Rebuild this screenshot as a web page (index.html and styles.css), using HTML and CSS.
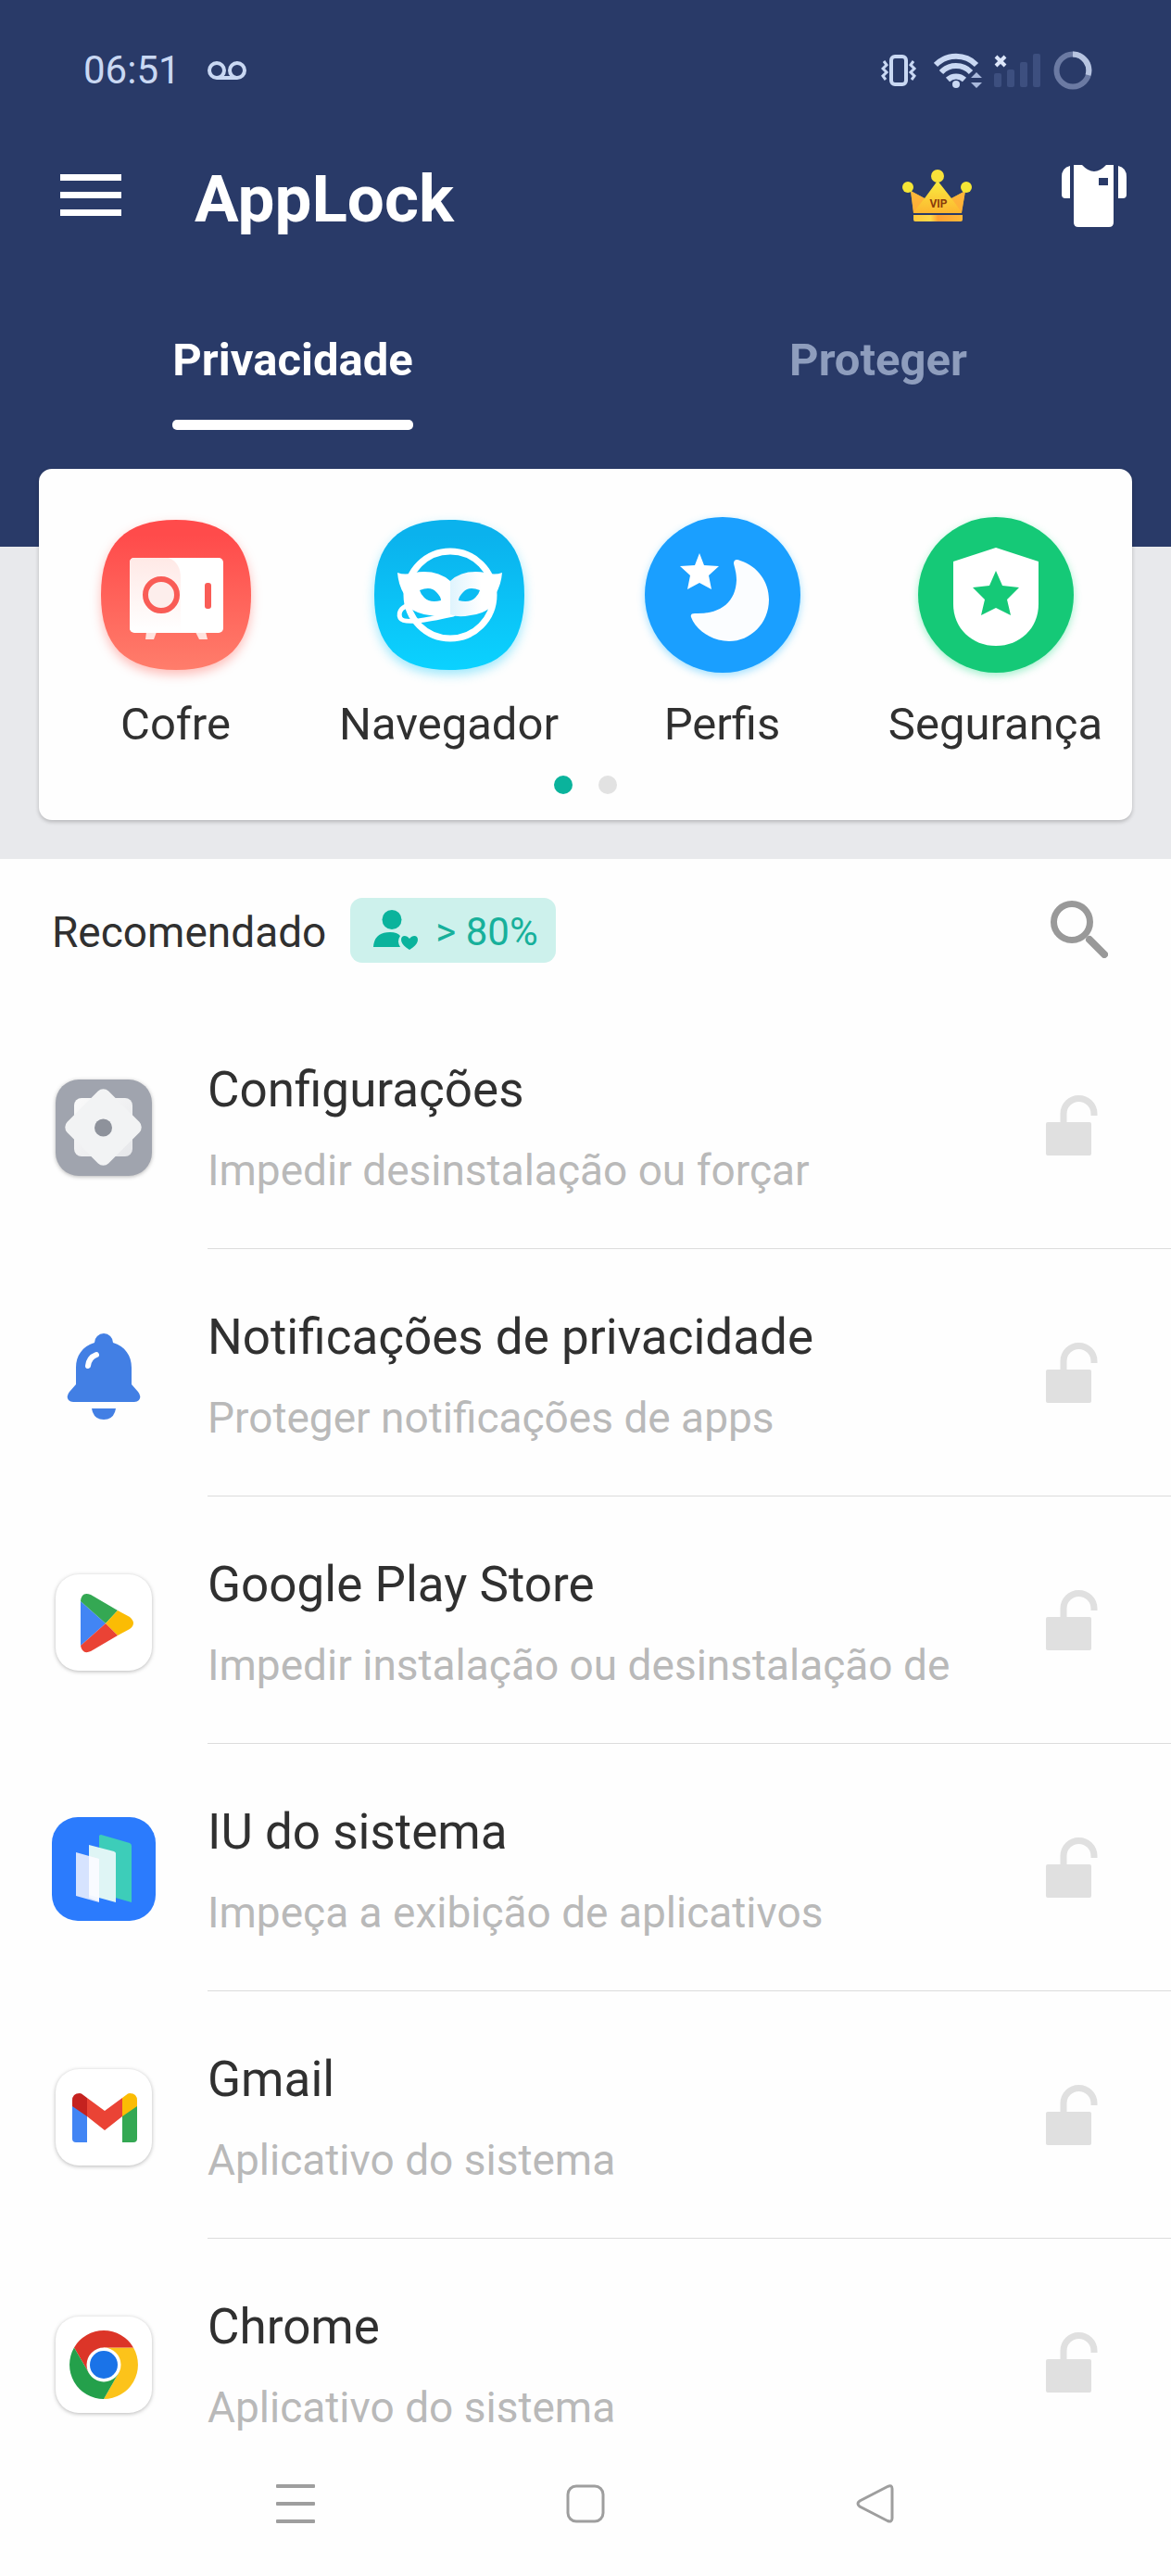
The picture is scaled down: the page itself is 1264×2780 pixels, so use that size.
FILE: index.html
```html
<!DOCTYPE html>
<html lang="pt-BR">
<head>
<meta charset="utf-8">
<meta name="viewport" content="width=device-width, initial-scale=1">
<title>AppLock</title>
<link rel="stylesheet" href="styles.css">
</head>
<body>
<svg class="defs" aria-hidden="true">
  <defs>
    <symbol id="unlocked" viewBox="0 0 56 66">
      <rect x="0" y="29" width="49" height="36" rx="2" fill="#e0e0e0"/>
      <path d="M19 31V20a16.500 16.500 0 0 1 33 0V22" fill="none" stroke="#e0e0e0" stroke-width="7"/>
    </symbol>
  </defs>
</svg>

<header class="header">
  <div class="status">
    <span class="status-side">
      <span class="clock">06:51</span>
      <svg width="44" height="22" viewBox="0 0 44 22" fill="none" stroke="#c9d8f3" stroke-width="4"><circle cx="11" cy="11" r="8"/><circle cx="33" cy="11" r="8"/><path d="M11 19H33"/></svg>
    </span>
    <span class="status-side status-icons">
      <svg width="44" height="34" viewBox="0 0 44 34" fill="none" stroke="#c9d8f3" stroke-width="4"><rect x="11" y="2" width="16" height="30" rx="4"/><path d="M3 7l3 4-4 4 4 4-4 4 3 4M35 7l-3 4 4 4-4 4 4 4-3 4" stroke-width="3"/></svg>
      <svg width="52" height="40" viewBox="0 0 52 40"><g fill="none" stroke="#c9d8f3" stroke-width="6"><path d="M2 14a31 31 0 0 1 44 0"/><path d="M8 22a22 22 0 0 1 32 0"/><path d="M15 30a13 13 0 0 1 18 0"/></g><circle cx="24" cy="35" r="4" fill="#c9d8f3"/><path d="M40 28l6-6 6 6zM40 33h12l-6 6z" fill="#a9b9dc"/></svg>
      <svg width="51" height="36" viewBox="0 0 51 36"><path d="M2 3l10 10M12 3L2 13" stroke="#dce6fa" stroke-width="4"/><g fill="#3d4f7f"><rect y="21" width="8" height="15" rx="2"/><rect x="14" y="17" width="8" height="19" rx="2"/><rect x="28" y="9" width="8" height="27" rx="2"/><rect x="42" width="8" height="36" rx="2"/></g></svg>
      <svg width="42" height="42" viewBox="0 0 42 42" fill="none" stroke-width="6"><circle cx="21" cy="21" r="17.500" stroke="#6b7aa3"/><path d="M21 3.500A17.500 17.500 0 0 1 37.500 26" stroke="#b7c4e0"/></svg>
    </span>
  </div>

  <div class="appbar">
    <button class="icon-button" type="button" aria-label="Menu">
      <svg width="66" height="46" viewBox="0 0 66 46" fill="#fff"><path d="M0 0h66v7H0zM0 19h66v7H0zM0 38h66v7H0z"/></svg>
    </button>
    <h1 class="app-title">AppLock</h1>
    <button class="icon-button" type="button" aria-label="VIP">
      <svg width="76" height="56" viewBox="0 0 76 56">
        <defs>
          <linearGradient id="gold" x1="0" y1="0" x2="0" y2="1"><stop offset="0" stop-color="#f8ee3f"/><stop offset="1" stop-color="#fdb530"/></linearGradient>
          <linearGradient id="band"><stop offset="0" stop-color="#ffc93c"/><stop offset=".35" stop-color="#ffd94a"/><stop offset=".5" stop-color="#ffa033"/><stop offset="1" stop-color="#ffb938"/></linearGradient>
        </defs>
        <path d="M9 23l15 8L38 12l15 19 15-8-4 24H12z" fill="url(#gold)"/>
        <path d="M9 23l15 8-12 15zM68 23l-15 8 11 15z" fill="#ffa83a" opacity=".7"/>
        <path d="M12 49h53v5q0 2-2 2H14q-2 0-2-2z" fill="url(#band)"/>
        <circle cx="38" cy="7" r="7" fill="#f8e23a"/><circle cx="6" cy="19" r="6" fill="#f5e636"/><circle cx="69" cy="19" r="6" fill="#f5e636"/>
        <text x="39" y="41" class="vip">VIP</text>
      </svg>
    </button>
    <button class="icon-button" type="button" aria-label="Temas">
      <svg width="70" height="67" viewBox="0 0 70 67" fill="#fff"><path fill-rule="evenodd" d="M13 0h9q13 14 26 0h8v62q0 5-5 5H18q-5 0-5-5zM40 14v8h10v-8z"/><path d="M9 1v35H4q-4 0-4-4V13Q0 3 9 1zM61 1v35h5q4 0 4-4V13Q70 3 61 1z"/></svg>
    </button>
  </div>

  <nav class="tabs" aria-label="Seções">
    <a class="tab tab-active" href="#privacidade" aria-current="page">Privacidade</a>
    <a class="tab" href="#proteger">Proteger</a>
  </nav>
</header>

<main id="privacidade">
  <section class="shortcuts">
    <div class="card">
      <div class="shortcut-grid">
        <a class="shortcut" href="#cofre">
          <svg class="glow-red" width="168" height="168" viewBox="0 0 168 168">
            <defs><linearGradient id="red" x1="0" y1="0" x2="0" y2="1"><stop offset=".1" stop-color="#ff4b4b"/><stop offset="1" stop-color="#ff7d6b"/></linearGradient>
            <linearGradient id="shade" x1="0" y1="0" x2="0" y2="1"><stop offset="0" stop-color="#ffe9e6"/><stop offset="1" stop-color="#fff"/></linearGradient></defs>
            <path d="M84 3C139 3 165 29 165 84S139 165 84 165 3 139 3 84 29 3 84 3z" fill="url(#red)"/>
            <path d="M52 124h11l-3 8h-9zM105 124h11l2 8h-9z" fill="#ffe3df"/>
            <rect x="34" y="44" width="101" height="81" rx="5" fill="#fff"/>
            <path d="M39 44h37q13 5 13 22v58H39q-5 0-5-5V49q0-5 5-5z" fill="url(#shade)"/>
            <circle cx="68" cy="84" r="17" fill="#fdeeec" stroke="#f95c56" stroke-width="6"/>
            <rect x="115" y="71" width="7" height="28" rx="3" fill="#f95c56"/>
          </svg>
          <span>Cofre</span>
        </a>
        <a class="shortcut" href="#navegador">
          <svg class="glow-cyan" width="168" height="168" viewBox="0 0 168 168">
            <defs><linearGradient id="cyan" x1="0" y1="0" x2="0" y2="1"><stop offset=".1" stop-color="#0bb2ed"/><stop offset="1" stop-color="#0bd2ff"/></linearGradient>
            <linearGradient id="wing"><stop offset="0" stop-color="#dff4fd"/><stop offset=".6" stop-color="#fff"/></linearGradient></defs>
            <path d="M84 3C139 3 165 29 165 84S139 165 84 165 3 139 3 84 29 3 84 3z" fill="url(#cyan)"/>
            <circle cx="85" cy="84" r="47" fill="none" stroke="#fff" stroke-width="7"/>
            <path d="M44 96C34 94 28 102 31 109C35 116 60 111 88 105" fill="none" stroke="#fff" stroke-width="5" stroke-linecap="round"/>
            <path d="M28 60q8 3 18 0 24-4 39 9v36q-8 4-22 1-27-3-28-23Q29 73 28 60z" fill="#fff"/>
            <path d="M141 60q-8 3-18 0-24-4-38 9v36q8 4 22 1 26-3 27-23 6-10 7-23z" fill="url(#wing)"/>
            <path d="M52 79q12-5 18 2 5 5 5 9-12 3-18-3-4-4-5-8zM117 79q-12-5-18 2-5 5-5 9 12 3 18-3 4-4 5-8z" fill="#0bbbf2"/>
          </svg>
          <span>Navegador</span>
        </a>
        <a class="shortcut" href="#perfis">
          <svg class="glow-blue" width="168" height="168" viewBox="0 0 168 168">
            <circle cx="84" cy="84" r="84" fill="#1a9fff"/>
            <path d="M59 39l5 13 16 1-11 10 3 15-13-7-13 7 3-15-11-10 16-1z" fill="#fff"/>
            <path d="M96 50C96 46 99 45 103 47C122 53 134 70 134 89C134 115 114 134 91 134C73 134 55 122 50 108C49 105 51 104 54 104C82 105 98 92 99 68C99 60 97 55 96 50z" fill="#fbfdff"/>
          </svg>
          <span>Perfis</span>
        </a>
        <a class="shortcut" href="#seguranca">
          <svg class="glow-green" width="168" height="168" viewBox="0 0 168 168">
            <circle cx="84" cy="84" r="84" fill="#15c977"/>
            <path d="M84 33l46 15v46c0 26-20 45-46 45s-46-19-46-45V48z" fill="#fff"/>
            <path d="M84 58l7 16 18 2-13 13 4 17-16-8-16 8 4-17-13-13 18-2z" fill="#15c977"/>
          </svg>
          <span>Segurança</span>
        </a>
      </div>
      <div class="dots"><span class="dot dot-active"></span><span class="dot"></span></div>
    </div>
  </section>

  <section>
    <div class="list-head">
      <h2 class="list-title">Recomendado</h2>
      <span class="badge">
        <svg width="49" height="44" viewBox="0 0 49 44" fill="#0ab39c"><circle cx="20" cy="10.500" r="10.500"/><path d="M0 40Q1 24 18 24q8 0 11 4-4 6 0 12z"/><path d="M39 43C33 39 30 36 30 32C30 27 36 27 39 31C42 27 48 27 48 32C48 36 45 39 39 43z"/></svg>
        <span class="badge-text">&gt; 80%</span>
      </span>
      <button class="icon-button search" type="button" aria-label="Pesquisar">
        <svg width="62" height="62" viewBox="0 0 62 62" fill="none" stroke="#999"><circle cx="23" cy="23" r="19.500" stroke-width="7"/><path d="M42 42L58 58" stroke-width="8" stroke-linecap="round"/></svg>
      </button>
    </div>

    <ul class="apps">
      <li class="app">
        <svg class="app-icon tile-shadow" width="112" height="112" viewBox="0 0 112 112">
          <defs><linearGradient id="gear" x1="0" y1="0" x2="1" y2="1"><stop offset="0" stop-color="#fafafa"/><stop offset="1" stop-color="#e6e7ea"/></linearGradient></defs>
          <rect x="4" y="5" width="104" height="104" rx="25" fill="#a0a4ae"/>
          <rect x="24" y="25" width="63" height="63" rx="8" fill="url(#gear)"/>
          <rect x="24" y="25" width="63" height="63" rx="8" fill="#f2f3f4" transform="rotate(45 55.500 56.500)"/>
          <circle cx="55.500" cy="57" r="9.500" fill="#8e929b"/>
        </svg>
        <div class="app-body">
          <div class="app-text"><h3 class="app-name">Configurações</h3><p class="app-note">Impedir desinstalação ou forçar</p></div>
          <button class="lock" type="button" aria-label="Bloquear Configurações"><svg width="56" height="66"><use href="#unlocked"/></svg></button>
        </div>
      </li>
      <li class="app">
        <svg class="app-icon" width="112" height="112" viewBox="0 0 112 112" fill="#427fe4">
          <path d="M46 22a10 10 0 0 1 20 0C79 26 86 36 86 49V67l7 8q4 5 1 9-2 2-5 2H23q-3 0-5-2-3-4 1-9l7-8V49C26 36 33 26 46 22z"/>
          <path d="M43 93h26q-2 12-13 12T43 93z"/>
          <path d="M48 35q-8 3-9 12" fill="none" stroke="#fff" stroke-width="6" stroke-linecap="round"/>
        </svg>
        <div class="app-body">
          <div class="app-text"><h3 class="app-name">Notificações de privacidade</h3><p class="app-note">Proteger notificações de apps</p></div>
          <button class="lock" type="button" aria-label="Bloquear Notificações de privacidade"><svg width="56" height="66"><use href="#unlocked"/></svg></button>
        </div>
      </li>
      <li class="app">
        <svg class="app-icon tile-shadow" width="112" height="112" viewBox="0 0 112 112">
          <rect x="4" y="5" width="104" height="104" rx="25" fill="#fff"/>
          <path d="M31 34L58 58 31 82z" fill="#4285f4"/>
          <path d="M31 34q1-11 11-7l29 17-13 14z" fill="#34a853"/>
          <path d="M71 44l13 7q8 7 0 13l-13 7-13-13z" fill="#fbbc04"/>
          <path d="M31 82q2 10 11 6l29-17-13-13z" fill="#ea4335"/>
        </svg>
        <div class="app-body">
          <div class="app-text"><h3 class="app-name">Google Play Store</h3><p class="app-note">Impedir instalação ou desinstalação de</p></div>
          <button class="lock" type="button" aria-label="Bloquear Google Play Store"><svg width="56" height="66"><use href="#unlocked"/></svg></button>
        </div>
      </li>
      <li class="app">
        <svg class="app-icon" width="112" height="112" viewBox="0 0 112 112">
          <rect width="112" height="112" rx="28" fill="#2b7bfd"/>
          <path d="M51 20q1-1 2-1l31 9q2 1 2 3v61L51 82z" fill="#3dcdb9"/>
          <path d="M40 30l27 7q2 1 2 2v53l-29-8z" fill="#dff5f5"/>
          <path d="M26 38l25 7v47l-25-7z" fill="#eef1fe" opacity=".88"/>
          <path d="M40 42l11 3v46l-11-4z" fill="#fff" opacity=".7"/>
        </svg>
        <div class="app-body">
          <div class="app-text"><h3 class="app-name">IU do sistema</h3><p class="app-note">Impeça a exibição de aplicativos</p></div>
          <button class="lock" type="button" aria-label="Bloquear IU do sistema"><svg width="56" height="66"><use href="#unlocked"/></svg></button>
        </div>
      </li>
      <li class="app">
        <svg class="app-icon tile-shadow" width="112" height="112" viewBox="0 0 112 112">
          <rect x="4" y="5" width="104" height="104" rx="25" fill="#fff"/>
          <path d="M22 44l16 11v29H26q-4 0-4-4z" fill="#4285f4"/>
          <path d="M92 44L76 55v29h12q4 0 4-4z" fill="#34a853"/>
          <path d="M38 36l19 14 19-14v20L57 71 38 56z" fill="#ea4335"/>
          <path d="M22 39q0-8 8-8 2 0 4 2l4 3v20L22 45z" fill="#c5221f"/>
          <path d="M92 39q0-8-8-8-2 0-4 2l-4 3v20l16-11z" fill="#fbbc04"/>
        </svg>
        <div class="app-body">
          <div class="app-text"><h3 class="app-name">Gmail</h3><p class="app-note">Aplicativo do sistema</p></div>
          <button class="lock" type="button" aria-label="Bloquear Gmail"><svg width="56" height="66"><use href="#unlocked"/></svg></button>
        </div>
      </li>
      <li class="app">
        <svg class="app-icon tile-shadow" width="112" height="112" viewBox="0 0 112 112">
          <rect x="4" y="5" width="104" height="104" rx="25" fill="#fff"/>
          <path d="M56 38.500H88A37 37 0 0 1 56 94L72 66z" fill="#fcc31a"/>
          <path d="M24 38.500A37 37 0 0 1 88 38.500H56L40 66z" fill="#dc3528"/>
          <path d="M24 38.500A37 37 0 0 0 56 94L72 66H40z" fill="#24a04b"/>
          <circle cx="56" cy="57" r="18.500" fill="#fff"/><circle cx="56" cy="57" r="15" fill="#1a73e8"/>
        </svg>
        <div class="app-body">
          <div class="app-text"><h3 class="app-name">Chrome</h3><p class="app-note">Aplicativo do sistema</p></div>
          <button class="lock" type="button" aria-label="Bloquear Chrome"><svg width="56" height="66"><use href="#unlocked"/></svg></button>
        </div>
      </li>
    </ul>
  </section>
</main>

<footer class="system-nav">
  <button class="nav-button" type="button" aria-label="Recentes"><svg width="42" height="42" viewBox="0 0 42 42" fill="#9e9e9e"><rect width="42" height="4" rx="1"/><rect y="19" width="42" height="4" rx="1"/><rect y="38" width="42" height="4" rx="1"/></svg></button>
  <button class="nav-button" type="button" aria-label="Início"><svg width="42" height="42" viewBox="0 0 42 42" fill="none" stroke="#9e9e9e" stroke-width="3"><rect x="2" y="2" width="38" height="38" rx="9"/></svg></button>
  <button class="nav-button" type="button" aria-label="Voltar"><svg width="42" height="42" viewBox="0 0 42 42" fill="none" stroke="#9e9e9e" stroke-width="3"><path d="M34 2.500L4 18q-4 3 0 6L34 39.500q5 2 5-3V5q0-5-5-2.500z"/></svg></button>
</footer>
</body>
</html>
```
FILE: styles.css
```css
* {
  box-sizing: border-box;
}

body {
  margin: 0;
  background: #fefefe;
  color: #303030;
  font-family: Roboto, "Liberation Sans", sans-serif;
}

h1, h2, h3, p, ul {
  margin: 0;
  padding: 0;
  font-weight: 400;
}

ul {
  list-style: none;
}

a {
  color: inherit;
  text-decoration: none;
}

button {
  padding: 0;
  border: 0;
  background: none;
  font: inherit;
}

svg {
  display: block;
  flex: none;
}

.defs {
  display: none;
}

.header {
  padding-top: 52px;
  background: #293a68;
  color: #fff;
}

.status {
  display: flex;
  align-items: center;
  justify-content: space-between;
  height: 48px;
  padding: 0 85px 0 90px;
}

.status-side {
  display: flex;
  align-items: center;
  gap: 28px;
}

.status-icons {
  gap: 13px;
}

.clock {
  color: #c9d8f3;
  font-size: 42px;
  line-height: 48px;
}

.appbar {
  display: flex;
  align-items: center;
  gap: 96px;
  margin-top: 75px;
  padding: 0 48px 0 65px;
}

.icon-button {
  padding-bottom: 8px;
}

.app-title {
  flex: 1;
  margin-left: -17px;
  font-size: 71px;
  font-weight: 700;
  line-height: 80px;
}

.vip {
  fill: #8a3b0c;
  font-size: 12px;
  font-weight: 700;
  text-anchor: middle;
}

.tabs {
  display: grid;
  grid-template-columns: 1fr 1fr;
  justify-items: center;
  margin-top: 104px;
}

.tab {
  display: grid;
  gap: 34px;
  color: #8e9dbd;
  font-size: 49px;
  font-weight: 700;
  line-height: 60px;
}

.tab::after {
  height: 11px;
  border-radius: 5px;
  content: "";
}

.tab-active {
  color: #fff;
}

.tab-active::after {
  background: #fff;
}

.shortcuts {
  padding: 42px;
  background: linear-gradient(#293a68 126px, #e8e9ec 126px);
}

.card {
  padding: 52px 0 28px;
  border-radius: 14px;
  background: #fefefe;
  box-shadow: 0 2px 4px rgba(0, 0, 0, .22);
}

.shortcut-grid {
  display: grid;
  grid-template-columns: repeat(4, 1fr);
}

.shortcut {
  display: flex;
  flex-direction: column;
  align-items: center;
  gap: 28px;
  font-size: 49px;
  line-height: 56px;
}

.glow-red { filter: drop-shadow(0 5px 6px rgba(255, 90, 80, .4)); }
.glow-cyan { filter: drop-shadow(0 5px 6px rgba(11, 200, 250, .4)); }
.glow-blue { filter: drop-shadow(0 3px 4px rgba(26, 180, 255, .4)); }
.glow-green { filter: drop-shadow(0 3px 4px rgba(21, 220, 130, .4)); }

.dots {
  display: flex;
  justify-content: center;
  gap: 28px;
  margin-top: 27px;
}

.dot {
  width: 20px;
  height: 20px;
  border-radius: 50%;
  background: #e2e2e2;
}

.dot-active {
  background: #0ab39c;
}

.list-head {
  display: flex;
  align-items: center;
  height: 154px;
  padding: 0 68px 0 56px;
}

.list-title {
  padding-top: 4px;
  font-size: 46px;
  line-height: 52px;
}

.badge {
  display: flex;
  align-items: center;
  gap: 18px;
  height: 70px;
  margin-left: 26px;
  padding: 0 19px 0 25px;
  border-radius: 13px;
  background: #cdf1ec;
  color: #17b09b;
}

.badge-text {
  padding-top: 4px;
  font-size: 42px;
  line-height: 48px;
}

.search {
  margin-left: auto;
  padding-bottom: 2px;
}

.app {
  display: flex;
  gap: 56px;
  padding-left: 56px;
}

.app-icon {
  margin-top: 79px;
}

.tile-shadow {
  filter: drop-shadow(0 1px 2px rgba(0, 0, 0, .28));
}

.app-body {
  display: flex;
  flex: 1;
  align-items: center;
  justify-content: space-between;
  padding: 63px 79px 58px 0;
  border-bottom: 1px solid #dcdcdc;
}

.app:last-child .app-body {
  padding-bottom: 0;
  border-bottom: 0;
}

.app-text {
  display: grid;
  gap: 29px;
}

.app-name {
  font-size: 53px;
  line-height: 64px;
}

.app-note {
  color: #b9b9b9;
  font-size: 46px;
  line-height: 52px;
}

.lock {
  padding-bottom: 4px;
}

.system-nav {
  display: grid;
  grid-template-columns: repeat(3, 313px);
  justify-content: center;
  align-items: center;
  height: 156px;
}

.nav-button {
  display: flex;
  justify-content: center;
}
```
